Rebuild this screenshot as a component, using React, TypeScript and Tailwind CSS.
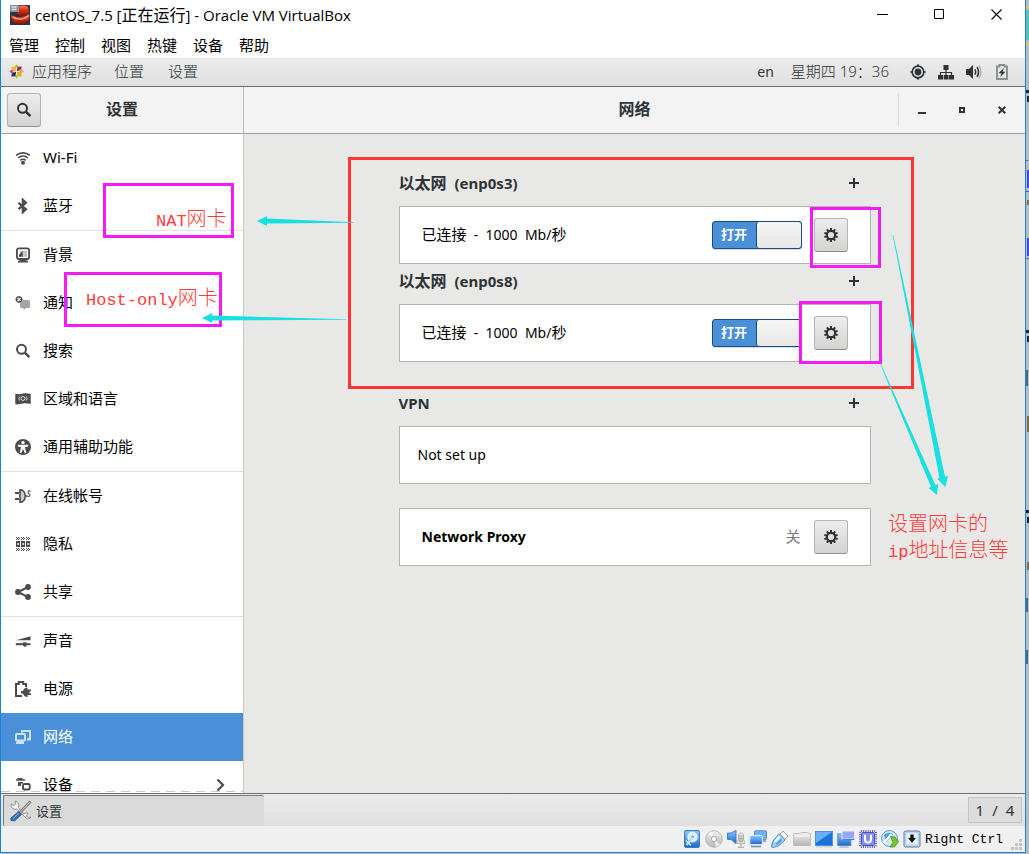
import React from "react";

const INK = "#2e3436";

function Svg({ size = 16, className = "", children }: { size?: number; className?: string; children: React.ReactNode }) {
  return (
    <svg width={size} height={size} viewBox="0 0 16 16" fill="currentColor" className={className} aria-hidden="true">
      {children}
    </svg>
  );
}

/* ---------- sidebar icons ---------- */

const WifiIcon = () => (
  <Svg>
    <g fill="none" stroke="currentColor" strokeWidth="1.7">
      <path d="M1.2 5.4C5 2 11 2 14.8 5.4" />
      <path d="M3.2 8C6 5.4 10 5.4 12.8 8" />
      <path d="M5.3 10.4C6.8 9 9.2 9 10.7 10.4" />
    </g>
    <circle cx="8" cy="12.8" r="2" />
  </Svg>
);
const BluetoothIcon = () => (
  <Svg>
    <path
      d="M3.500 4.800 11 11.300 7.800 14.200V1.800L11 4.700 3.500 11.200"
      fill="none"
      stroke="currentColor"
      strokeWidth="2.200"
    />
  </Svg>
);
const BackgroundIcon = () => (
  <Svg>
    <rect x="1.9" y="1.4" width="12.2" height="10.6" rx="2" fill="none" stroke="currentColor" strokeWidth="1.8" />
    <path d="M5 3.8h7v6H5z" fill="#c4c4c4" />
    <path d="M4 9.8V7.8L7.6 4v5.8z" />
    <path d="M3 14c2-1.4 8-1.4 10 0v1.4H3z" />
  </Svg>
);
const NotificationsIcon = () => (
  <Svg>
    <path d="M8 5h5.5Q15 5 15 6.5v5q0 1.500-1.500 1.500H11l-2 2-1-2H6.500Q5 13 5 11.500V9z" fill="#a5a5a5" />
    <circle cx="4" cy="4.500" r="2.700" fill="#fff" stroke="currentColor" strokeWidth="1.300" />
    <path d="M4 1v7M.5 4.500h7" stroke="currentColor" strokeWidth=".9" />
    <circle cx="4" cy="4.500" r="1" fill="#fff" />
  </Svg>
);
const SearchIcon = () => (
  <Svg>
    <circle cx="6.500" cy="6.300" r="4.500" fill="none" stroke="currentColor" strokeWidth="2" />
    <path d="m9.800 9.600 4.600 4.600" stroke="currentColor" strokeWidth="2.500" />
  </Svg>
);
const RegionIcon = () => (
  <Svg>
    <path d="M.3 2.500c3 1.500 5 .5 7.700 0s5-.3 7.700.5V13c-3-.8-5-1-7.700-.5s-5 1.300-7.700.8z" />
    <g fill="none" stroke="#ddd" strokeWidth="1">
      <circle cx="8" cy="7.500" r="2" />
      <path d="M4.500 5.500q-1 2 0 4M11.500 5.500q1 2 0 4" />
    </g>
  </Svg>
);
const AccessIcon = () => (
  <Svg>
    <circle cx="8" cy="8" r="8" />
    <circle cx="8" cy="3.600" r="1.700" fill="#fff" />
    <path d="M2.800 5.800h10.400v1.700L10 8.300l1.300 5.400-1.500.5L8 10l-1.800 4.200-1.500-.5L6 8.300l-3.200-.8z" fill="#fff" />
  </Svg>
);
const AccountsIcon = () => (
  <Svg>
    <path d="M0 5h4M0 11h4" stroke="currentColor" strokeWidth="2" />
    <path d="M5 1.900c7 0 7 12.200 0 12.200z" fill="#ccc" stroke="currentColor" strokeWidth="1.600" />
    <path d="M10.500 8h2" stroke="currentColor" strokeWidth="1.500" />
    <path d="M15.500 3c-3-.6-3 2-1.500 2.800s1.300 3-1.300 2.600" fill="none" stroke="currentColor" strokeWidth="1.100" />
  </Svg>
);
const PrivacyIcon = () => (
  <Svg>
    {[1, 6, 11].map((x) => (
      <g key={x}>
        <path d={`M${x} 1.500h1M${x + 2} 1.500h1M${x + 1} 2.500h1M${x + 3} 2.500h1M${x} 3.500h1M${x + 2} 3.500h1M${x} 12.500h1M${x + 2} 12.500h1M${x + 1} 13.500h1M${x + 3} 13.500h1M${x} 14.500h1M${x + 2} 14.500h1`} stroke="currentColor" strokeWidth="1" />
        <path d={`M${x} 5h4v6H${x}zM${x + 1.5} 7v2h1.300V7z`} fillRule="evenodd" />
      </g>
    ))}
  </Svg>
);
const ShareIcon = () => (
  <Svg>
    <path d="M13 3 3 8l10 5.200" fill="none" stroke="currentColor" strokeWidth="2" />
    <circle cx="13" cy="3" r="2.900" />
    <circle cx="3" cy="8" r="2.900" />
    <circle cx="13" cy="13" r="2.900" />
  </Svg>
);
const SoundIcon = () => (
  <Svg>
    <path d="M1 7.200 15.500 3.300v4z" />
    <path d="M.8 10.200h14.700v2H.8z" />
    <path d="M8 9.200h3.500v4l-1.700.8L8 12.500z" />
  </Svg>
);
const PowerIcon = () => (
  <Svg>
    <path d="M7 15H1V3h2.800V1h4.400v2H11v3" fill="none" stroke="currentColor" strokeWidth="2" />
    <path d="M12.500 6.500v2H16v1.800h-1.500v2.200H16V14h-3.500v2c-2.500 0-4-1.500-4.500-3.500H6V10h2c.5-2 2-3.500 4.500-3.500z" />
  </Svg>
);
const NetworkIcon = () => (
  <Svg className="text-[#cfe0f4]">
    <path d="M7 3.800V2h8v7.800h-2.500" fill="none" stroke="currentColor" strokeWidth="2" />
    <path d="M12 10h4v1.500h-4z" />
    <rect x="1" y="5" width="9" height="6.500" rx=".6" fill="none" stroke="currentColor" strokeWidth="2" />
    <path d="M3.500 12h4l1.500 1v2H1v-2z" />
  </Svg>
);
const DevicesIcon = () => (
  <Svg>
    <path d="M2.500 1h5v1.200H10v1.600H1V2.200h1.500zM3 5h5v1.600H6V9H3z" />
    <rect x="8" y="7" width="6.700" height="5.500" rx="1.300" fill="none" stroke="currentColor" strokeWidth="1.900" />
    <path d="M8 14h7v1H8z" />
  </Svg>
);

type Item = { label: string; icon: React.ReactNode; first?: boolean; active?: boolean; more?: boolean };

const ITEMS: Item[] = [
  { label: "Wi-Fi", icon: <WifiIcon /> },
  { label: "蓝牙", icon: <BluetoothIcon /> },
  { label: "背景", icon: <BackgroundIcon />, first: true },
  { label: "通知", icon: <NotificationsIcon /> },
  { label: "搜索", icon: <SearchIcon /> },
  { label: "区域和语言", icon: <RegionIcon /> },
  { label: "通用辅助功能", icon: <AccessIcon /> },
  { label: "在线帐号", icon: <AccountsIcon />, first: true },
  { label: "隐私", icon: <PrivacyIcon /> },
  { label: "共享", icon: <ShareIcon /> },
  { label: "声音", icon: <SoundIcon />, first: true },
  { label: "电源", icon: <PowerIcon /> },
  { label: "网络", icon: <NetworkIcon />, active: true },
  { label: "设备", icon: <DevicesIcon />, more: true },
];

function Sidebar() {
  return (
    <nav className="relative w-[243px] shrink-0 overflow-hidden border-r border-[#c9c9c7] bg-white">
      {ITEMS.map((item) => (
        <React.Fragment key={item.label}>
          {item.first && <div className="h-px bg-[#e2e2e2]" />}
          <a
            href="#"
            className={
              item.active
                ? "flex h-12 items-center gap-3 bg-[#4a90d9] pl-[14px] text-[15px] text-white"
                : "flex h-12 items-center gap-3 pl-[14px] text-[15px] text-black"
            }
          >
            <span className={item.active ? "" : "text-[#4b4b4b]"}>{item.icon}</span>
            <span className="flex-1 pb-[2px]">{item.label}</span>
            {item.more && (
              <svg width="10" height="14" viewBox="0 0 10 14" className="mr-[17px]" aria-hidden="true">
                <path d="m1.500 1.500 5.500 5.500-5.500 5.500" fill="none" stroke="#4b4b4b" strokeWidth="2.200" />
              </svg>
            )}
          </a>
        </React.Fragment>
      ))}
      <div className="absolute inset-x-0 bottom-px h-px bg-[repeating-linear-gradient(90deg,#c8c8c8_0_9px,#ffffff_9px_15px)]" />
    </nav>
  );
}

/* ---------- content ---------- */

function GearButton({ label }: { label: string }) {
  return (
    <button
      aria-label={label}
      className="flex h-[34px] w-[34px] items-center justify-center rounded-[3px] border border-[#b4b4b0] border-b-[#8f8f8c] bg-linear-to-b from-[#ededed] to-[#d3d3d1] text-[#2e3436]"
    >
      <Svg>
        <circle cx="8" cy="8" r="4.200" fill="none" stroke="currentColor" strokeWidth="2.200" />
        {[0, 36, 72, 108, 144, 180, 216, 252, 288, 324].map((a) => (
          <path key={a} d="M7 1h2v2.500H7z" transform={`rotate(${a} 8 8)`} />
        ))}
      </Svg>
    </button>
  );
}

function Switch({ label }: { label: string }) {
  return (
    <button
      role="switch"
      aria-checked="true"
      aria-label={label}
      className="flex h-7 w-[90px] overflow-hidden rounded-[3px] border border-[#1c4a7c] bg-[#4a90d9] shadow-[0_1px_0_#d5dde6]"
    >
      <span className="flex h-full flex-1 items-center justify-center pb-[2px] text-[13px] font-bold text-white">打开</span>
      <span className="h-full w-[45px] rounded-[3px] border-l border-[#1c4a7c] bg-linear-to-b from-[#f6f6f6] to-[#e6e6e4]" />
    </button>
  );
}

function Heading({ children, label }: { children: React.ReactNode; label: string }) {
  return (
    <div className="mb-[6px] flex h-[34px] items-center justify-between pr-[5px] text-[#2e3436]">
      <h2 className="text-[15px] font-bold">{children}</h2>
      <button aria-label={label} className="flex h-6 w-6 items-center justify-center">
        <svg width="10" height="10" viewBox="0 0 10 10" aria-hidden="true">
          <path d="M5 0v10M0 5h10" stroke="currentColor" strokeWidth="2" />
        </svg>
      </button>
    </div>
  );
}

function Card({ children }: { children: React.ReactNode }) {
  return <div className="flex h-[58px] items-center border border-[#b4b4b0] bg-white pr-[22px] pl-[22px]">{children}</div>;
}

function Ethernet({ name }: { name: string }) {
  return (
    <section>
      <Heading label={`添加 ${name}`}>
        <span className="text-[16px]">以太网</span>
        <span className="pl-2">({name})</span>
      </Heading>
      <Card>
        <p className="flex-1 pb-[2px] text-[14px] text-black">
          <span className="text-[15px]">已连接</span>&nbsp; - &nbsp;1000&nbsp; Mb/<span className="text-[15px]">秒</span>
        </p>
        <div className="flex items-center gap-3">
          <Switch label={name} />
          <GearButton label={`设置 ${name}`} />
        </div>
      </Card>
    </section>
  );
}

function Content() {
  return (
    <main className="flex flex-1 justify-center bg-[#e8e8e6] pt-8">
      <div className="w-[472px] text-[14px]">
        <Ethernet name="enp0s3" />
        <Ethernet name="enp0s8" />
        <section className="mt-6">
          <Heading label="添加 VPN">VPN</Heading>
          <div className="flex h-[58px] items-center border border-[#b4b4b0] bg-white px-[18px] text-black">Not set up</div>
        </section>
        <section className="mt-6">
          <Card>
            <h2 className="flex-1 font-bold text-black">Network Proxy</h2>
            <span className="pr-[13px] pb-[2px] text-[15px] text-[#7b7b7b]">关</span>
            <GearButton label="代理设置" />
          </Card>
        </section>
      </div>
    </main>
  );
}

/* ---------- window chrome ---------- */

function TitleBar() {
  return (
    <header className="flex h-8 items-start justify-between bg-white pr-[22px] pl-[9px] text-black">
      <div className="flex h-[29px] items-center gap-[5px]">
        <svg width="20" height="20" viewBox="0 0 20 20" aria-hidden="true">
          <defs>
            <linearGradient id="hat" x1="0" y1="0" x2="0" y2="1">
              <stop offset="0" stopColor="#ff7a50" />
              <stop offset=".5" stopColor="#d92a12" />
              <stop offset="1" stopColor="#8c1408" />
            </linearGradient>
          </defs>
          <rect width="20" height="20" fill="#2b3440" />
          <path d="M7 2c4-2 9-2 11 0l1 6c-1 3-9 4-12 1z" fill="url(#hat)" />
          <path d="M1 10c4 3 13 3 18-1 2 5-2 10-9 10-5 0-9-4-9-9z" fill="url(#hat)" />
          <path d="M3 12c4 3 11 3 15-1" fill="none" stroke="#ffb088" strokeWidth="1.200" />
          <rect x="0" y="0" width="9" height="7" fill="#8d939a" />
          <path d="M1.500 2h5M1.500 4.500h5" stroke="#dfe2e5" strokeWidth="1.500" />
        </svg>
        <h1 className="font-['Open_Sans','Noto_Sans_CJK_SC',sans-serif] text-[15px]">
          centOS_7.5 [<span className="text-[16px]">正在运行</span>] - Oracle VM VirtualBox
        </h1>
      </div>
      <div className="flex h-[29px] items-center gap-[45px]">
        <button aria-label="最小化" className="flex h-5 w-3 items-center">
          <svg width="11" height="11" viewBox="0 0 11 11"><path d="M0 5.500h11" stroke="#000" /></svg>
        </button>
        <button aria-label="最大化" className="flex h-5 w-3 items-center">
          <svg width="11" height="11" viewBox="0 0 11 11"><path d="M.5.5h9v9h-9z" fill="none" stroke="#000" /></svg>
        </button>
        <button aria-label="关闭" className="flex h-5 w-3 items-center">
          <svg width="11" height="11" viewBox="0 0 11 11"><path d="m.5.5 10 10M10.500.5l-10 10" stroke="#000" strokeWidth="1.100" /></svg>
        </button>
      </div>
    </header>
  );
}

function MenuBar() {
  return (
    <nav className="flex h-[26px] items-center gap-4 bg-white pl-2 text-[15px] text-black">
      {["管理", "控制", "视图", "热键", "设备", "帮助"].map((m) => (
        <button key={m}>{m}</button>
      ))}
    </nav>
  );
}

function TopBar() {
  return (
    <div className="flex h-[29px] items-center justify-between border-b border-[#6e6e6e] bg-linear-to-b from-[#ebebeb] to-[#e0e0e0] pr-[15px] pb-px pl-2 text-[15px] text-[#2e3436]">
      <div className="flex items-center font-light">
        <svg width="15" height="15" viewBox="0 0 16 16" className="mr-2" aria-hidden="true">
          {[
            ["#9ccd2a", 0],
            ["#932279", 45],
            ["#efa724", 90],
            ["#efa724", 135],
            ["#9ccd2a", 180],
            ["#262577", 225],
            ["#c34b96", 270],
            ["#f0b93a", 315],
          ].map(([c, a]) => (
            <path key={a} d="M8 7.500 5.500 3.500 8 .3l2.500 3.200z" fill={c as string} transform={`rotate(${a} 8 8)`} />
          ))}
          <path d="M8 4v8M4 8h8" stroke="#fff" strokeWidth=".7" />
        </svg>
        <button className="mr-[22px]">应用程序</button>
        <button className="mr-6">位置</button>
        <button>设置</button>
      </div>
      <div className="flex items-center">
        <span className="mr-[17px] text-[14px]">en</span>
        <span className="mr-[21px] font-light">星期四 19：36</span>
        <div className="flex items-center gap-3">
          <Svg>
            <circle cx="8" cy="8" r="5.800" fill="none" stroke="currentColor" strokeWidth="1.700" />
            <circle cx="8" cy="8" r="3.400" />
            <path d="M8 .3v2M8 13.700v2M.3 8h2M13.700 8h2" stroke="currentColor" strokeWidth="1.600" />
          </Svg>
          <Svg>
            <path d="M5.500 1h5v5h-5zM0 11h5v4.500H0zM5.700 11h4.800v4.500H5.700zM11 11h5v4.500h-5z" />
            <path d="M8 6v5M2.500 11V8.500h11V11" fill="none" stroke="currentColor" strokeWidth="1.200" />
          </Svg>
          <Svg>
            <path d="M0 5h3l4-4v14l-4-4H0z" />
            <path d="M9 5.300q1.500 2.700 0 5.400M11 3.200q3 4.800 0 9.600" fill="none" stroke="currentColor" strokeWidth="1.600" />
            <path d="M13 1.500q3.600 6.500 0 13" fill="none" stroke="#b5b5b5" strokeWidth="1.600" />
          </Svg>
          <Svg>
            <path d="M3 2.500h2.500v-1.500h5v1.500H13v12.500H3z" fill="none" stroke="#8c8f90" strokeWidth="1.900" />
            <path d="M9.800 4 4.500 9.200h3L6.200 13l5.300-5.200H8.600z" />
          </Svg>
        </div>
      </div>
    </div>
  );
}

function SettingsHeader() {
  return (
    <div className="flex h-[47px] border-b border-[#a0a09e] bg-[#f3f3f3] text-[16px] font-bold text-[#2e3436]">
      <div className="relative flex w-[243px] shrink-0 items-center justify-center border-r border-[#b9b9b7]">
        <button
          aria-label="搜索"
          className="absolute left-[6px] flex h-[34px] w-[34px] items-center justify-center rounded-[3px] border border-[#b4b4b0] border-b-[#8f8f8c] bg-linear-to-b from-[#ededed] to-[#d3d3d1]"
        >
          <SearchIcon />
        </button>
        <h2 className="pb-[2px]">设置</h2>
      </div>
      <div className="relative flex flex-1 items-center justify-center">
        <h2 className="pb-[2px]">网络</h2>
        <div className="absolute right-[3px] flex h-[34px] items-center border-l border-[#dcdcdc] pl-[3px]">
          <button aria-label="最小化" className="flex h-[34px] w-10 items-center justify-center">
            <svg width="10" height="10" viewBox="0 0 10 10"><path d="M1 8h8" stroke={INK} strokeWidth="2" /></svg>
          </button>
          <button aria-label="还原" className="flex h-[34px] w-10 items-center justify-center">
            <svg width="6" height="6" viewBox="0 0 6 6"><path d="M1 1h4v4H1z" fill="none" stroke={INK} strokeWidth="2" /></svg>
          </button>
          <button aria-label="关闭" className="flex h-[34px] w-10 items-center justify-center">
            <svg width="8" height="8" viewBox="0 0 8 8"><path d="m.7.7 6.600 6.600M7.300.7.7 7.300" stroke={INK} strokeWidth="2" /></svg>
          </button>
        </div>
      </div>
    </div>
  );
}

function TaskBar() {
  return (
    <footer className="flex h-[33px] items-stretch justify-between border-t border-[#6e6e6e] bg-linear-to-b from-[#ebebeb] to-[#e0e0e0] pr-[3px] pl-[2px] text-[#2e3436]">
      <button className="mt-px flex w-[261px] items-center gap-1 rounded-[2px] border-t border-l border-[#777] bg-[#dadada] pl-[6px] text-[13px]">
        <svg width="22" height="22" viewBox="0 0 22 22" aria-hidden="true">
          <path d="M1 4a4.500 4.500 0 0 0 6 5l9 9a3.500 3.500 0 0 0 5-1l-3 .5-1.500-1.500L18 13a4 4 0 0 0-4 1L8.500 7.500A4.500 4.500 0 0 0 5 1l.5 3L4 5.500z" fill="#f4f4f2" stroke="#8a8a86" strokeWidth=".9" />
          <path d="M20.500 1.500 9.500 13" stroke="#777" strokeWidth="2.600" />
          <path d="M20 2 9.500 13" stroke="#d8d8d6" strokeWidth="1" />
          <path d="m8.500 11.500 3 3L4.500 21 1 20.500.8 18z" fill="#3a6cb0" stroke="#20467c" strokeWidth=".7" />
          <path d="m3 18.500 6-5.500" stroke="#9dbbe4" />
        </svg>
        设置
      </button>
      <button className="my-[3px] flex w-[54px] items-center justify-center gap-2 border border-[#c6c6c6] bg-[#dcdcdc] text-[15px]">
        <span>1</span>
        <span>/</span>
        <span>4</span>
      </button>
    </footer>
  );
}

function StatusIcon({ children }: { children: React.ReactNode }) {
  return (
    <svg width="18" height="18" viewBox="0 0 18 18" aria-hidden="true">
      {children}
    </svg>
  );
}

function StatusBar() {
  return (
    <div className="flex h-[26px] items-center justify-end gap-1 bg-[#f0f0f0] pr-px text-black">
      <svg width="0" height="0" className="absolute" aria-hidden="true">
        <defs>
          <linearGradient id="blue" x1="0" y1="0" x2="0" y2="1">
            <stop offset="0" stopColor="#8cc8ff" />
            <stop offset="1" stopColor="#1767cf" />
          </linearGradient>
          <linearGradient id="grey" x1="0" y1="0" x2="0" y2="1">
            <stop offset="0" stopColor="#f2f2f2" />
            <stop offset="1" stopColor="#b4b4b4" />
          </linearGradient>
        </defs>
      </svg>
      <StatusIcon>
        <rect x="1.500" y=".5" width="15" height="17" rx="1.500" fill="url(#blue)" stroke="#3b7fc8" />
        <circle cx="9.500" cy="6.800" r="5.600" fill="#e0f0ff" stroke="#8abcf0" />
        <circle cx="9.500" cy="6.800" r="1.600" fill="#7db8ef" />
        <path d="m9.500 7.500-6 7.500" stroke="#b9dcfb" strokeWidth="2.400" />
        <path d="m3 10.500 5 5" stroke="#e6f3ff" strokeWidth="1.300" />
      </StatusIcon>
      <StatusIcon>
        <circle cx="9" cy="9" r="8.300" fill="url(#grey)" stroke="#b9b9b9" />
        <path d="M9 9 3 3.500 7 1zM9 9l6 5.500L11 17z" fill="#fff" opacity=".7" />
        <circle cx="9" cy="9" r="2.600" fill="#fafafa" stroke="#aaa" />
      </StatusIcon>
      <StatusIcon>
        <path d="M.5 3h3.500L9 .5v13L4 9.500H.5z" fill="url(#blue)" stroke="#2f72bd" strokeWidth=".8" />
        <rect x="11.500" y="3" width="5" height="9" rx="2" fill="url(#grey)" stroke="#aaa" strokeWidth=".7" />
        <path d="M10 10v3.500h8V10M14 13.500v4M11 17.300h6" fill="none" stroke="#b0b0b0" strokeWidth="1.200" />
        <path d="M11.500 6h5M11.500 8.500h5" stroke="#999" strokeWidth=".7" />
      </StatusIcon>
      <StatusIcon>
        <rect x="5.500" y=".8" width="12" height="8.700" rx="1" fill="#6db2f5" stroke="#5f8fc4" />
        <path d="M12 11h5" stroke="#7f93aa" strokeWidth="1.500" />
        <rect x=".8" y="5.500" width="12.500" height="9" rx="1" fill="url(#blue)" stroke="#e4f0fc" />
        <path d="M2 16.500h10" stroke="#7f93aa" strokeWidth="1.800" />
      </StatusIcon>
      <StatusIcon>
        <path d="m12 1 5 5-3.300 3.500-5-5z" fill="#f2f2f2" stroke="#8b8b8b" strokeWidth=".8" />
        <path d="M8.200 3.800 14.200 9.800 8 15.500c-3 1.700-7 2.300-7.300 1.600S1 12.500 3 9.500z" fill="#9fd0fa" stroke="#3b80c8" strokeWidth=".9" />
        <path d="m10.500 9.500-5 5" stroke="#4a9bea" strokeWidth="2" />
        <path d="M8.500 6.500 4 11.500" stroke="#fff" strokeWidth="2" />
      </StatusIcon>
      <StatusIcon>
        <path d="M.7 15.500v-12h6l1.500-1h6.300l1.500 1h1.500v12z" fill="url(#grey)" stroke="#bcbcbc" />
        <path d="M1 6h16" stroke="#fafafa" />
      </StatusIcon>
      <StatusIcon>
        <rect x=".5" y="1.500" width="17" height="14" fill="#1b72dc" stroke="#4f93df" />
        <path d="M1 2h16L1 13z" fill="#6bb0f7" />
        <path d="M1 16.800h16" stroke="#c7c7c7" />
      </StatusIcon>
      <StatusIcon>
        <rect x=".8" y="4" width="13" height="11.500" fill="url(#blue)" stroke="#4c8ad2" />
        <path d="M2.500 17h9" stroke="#a9b7c8" strokeWidth="1.400" />
        <rect x="5" y="1" width="12.500" height="8" fill="#93a8fa" stroke="#e6ebff" />
        <path d="M5.500 9.500h12" stroke="#5b72d8" />
      </StatusIcon>
      <StatusIcon>
        <rect x="1" y="1" width="16" height="16" rx="1" fill="none" stroke="#5560c8" strokeWidth="2" strokeDasharray="1 1.200" />
        <rect x="2.500" y="2.500" width="13" height="13" rx="1" fill="#7f8ff0" stroke="#4a55c0" />
        <path d="M6 4.800v5q0 2.700 3 2.700t3-2.700v-5" fill="none" stroke="#fff" strokeWidth="2" />
      </StatusIcon>
      <StatusIcon>
        <circle cx="8.500" cy="8.500" r="8" fill="#cfe6fb" stroke="#5d9cdc" />
        <path d="M3 5q5-4 9-1-3 4-7 8z" fill="#4e9ce8" />
        <path d="m2.500 13 8-9" stroke="#fff" strokeWidth="2" />
        <path d="m9.500 6.500 4.500.5 3.500 4.500-4 5.500H9l3-4.500z" fill="#76c52c" stroke="#4b8f16" strokeWidth=".8" />
      </StatusIcon>
      <StatusIcon>
        <rect x="1" y="1" width="16" height="16" rx="1.500" fill="#b9d5f3" stroke="#5d7fa8" />
        <rect x="3.500" y="3" width="11" height="11.500" rx="1" fill="#eaf3fd" />
        <path d="M7.300 4.500h3.400V8H13l-4 4.800L5 8h2.300z" fill="#111" />
      </StatusIcon>
      <span className="font-['Liberation_Mono',monospace] text-[13px]">Right Ctrl</span>
      <svg width="13" height="13" viewBox="0 0 13 13" className="ml-1 self-end" aria-hidden="true">
        <path d="M8 0h3v3H8zM4 4h3v3H4zM8 4h3v3H8zM0 8h3v3H0zM4 8h3v3H4zM8 8h3v3H8z" fill="#c3c3c3" />
      </svg>
    </div>
  );
}

/* ---------- tutorial mark-up over the window ---------- */

function Annotations() {
  const note = "absolute font-['Noto_Sans_CJK_SC',sans-serif] text-[20px] leading-[26px] font-light whitespace-nowrap text-[#ff3b3b]";
  return (
    <div className="pointer-events-none absolute inset-0 overflow-hidden">
      <div className="absolute top-[157px] left-[348px] h-[232px] w-[566px] border-3 border-[#fc3535]" />
      <div className="absolute top-[183px] left-[103px] h-[55px] w-[131px] border-3 border-[#f41cf4]" />
      <div className="absolute top-[272px] left-[64px] h-[55px] w-[158px] border-3 border-[#f41cf4]" />
      <div className="absolute top-[207px] left-[810px] h-[61px] w-[71px] border-3 border-[#f41cf4]" />
      <div className="absolute top-[301px] left-[799px] h-[63px] w-[83px] border-3 border-[#f41cf4]" />
      <svg width="1029" height="854" viewBox="0 0 1029 854" fill="#18dfe0" className="absolute top-0 left-0" aria-hidden="true">
        <path d="M257 221 267 216v2.500L354 222.200v.6L267 223.500v2.500z" />
        <path d="M202 318 212 313v2.500L346 319.200v.6L212 320.500v2.500z" />
        <path d="M945.300 487 948 476l-3 .7L893.300 235h-.6L939.500 478l-2.300.5z" />
        <path d="M937 495 938.200 484l-2.700 1.200L880.600 363.500h-.6L931 487l-2.300 1z" />
      </svg>
      <div className={`${note} top-[205px] left-[156px]`}>
        <span className="font-['Liberation_Mono',monospace] text-[17px]">NAT</span>网卡
      </div>
      <div className={`${note} top-[284px] left-[86px]`}>
        <span className="font-['Liberation_Mono',monospace] text-[17px]">Host-only</span>网卡
      </div>
      <div className={`${note} top-[510px] left-[888px]`}>
        设置网卡的
        <br />
        <span className="font-['Liberation_Mono',monospace] text-[17px]">ip</span>地址信息等
      </div>
    </div>
  );
}

export default function App() {
  return (
    <div className="relative flex h-screen bg-[#bdbbb9] pb-px font-['Noto_Sans','Noto_Sans_CJK_SC',sans-serif] leading-none">
      <div className="flex min-w-0 flex-1 flex-col border-r border-b border-l border-[#1883d7]">
        <TitleBar />
        <MenuBar />
        <TopBar />
        <SettingsHeader />
        <div className="flex min-h-0 flex-1">
          <Sidebar />
          <Content />
        </div>
        <TaskBar />
        <StatusBar />
      </div>
      <svg width="3" height="853" viewBox="0 0 3 853" className="shrink-0" aria-hidden="true">
        <path d="M0 10h3v30H0z" fill="#5fc0b8" />
        <path d="M0 6h3v3H0zM0 42h3v4H0z" fill="#d8c96a" />
        <path d="M0 90h3v3H0zM1 96h2v6H1zM0 330h3v3H0zM1 336h2v6H1zM0 510h3v3H0zM1 517h2v6H1z" fill="#26223c" />
        <path d="M0 160h2v1H0zM1 170h2v18H1zM0 191h3v1H0zM0 258h3v1H1zM1 238h2v18H1z" fill="#4a4ae0" />
        <path d="M0 370h2v16H0zM0 598h2v14H0zM0 650h2v14H0z" fill="#46688f" />
        <path d="M1 200h2v5H1zM1 416h2v16H1zM1 562h2v8H1z" fill="#8d6b4a" />
      </svg>
      <Annotations />
    </div>
  );
}
